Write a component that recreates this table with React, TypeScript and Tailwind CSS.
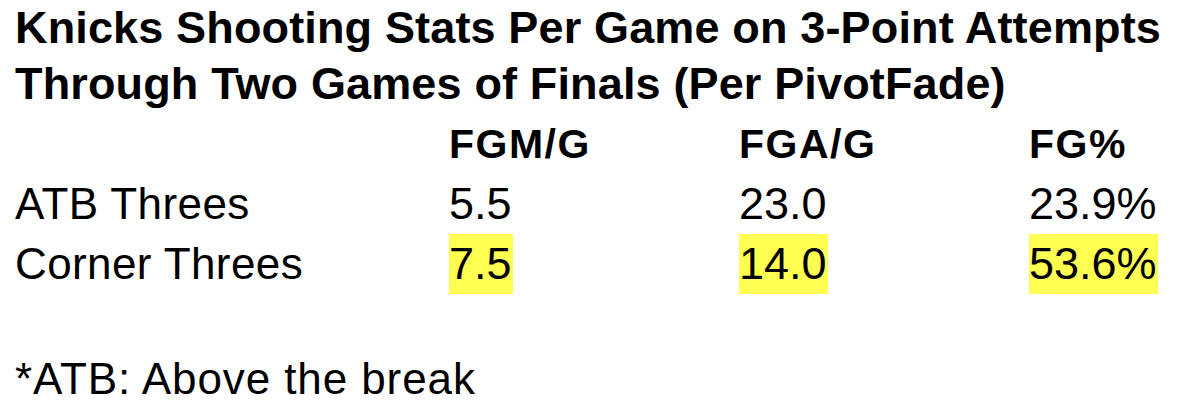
const rows = [
  { label: "ATB Threes", values: ["5.5", "23.0", "23.9%"], highlight: false },
  { label: "Corner Threes", values: ["7.5", "14.0", "53.6%"], highlight: true },
];

const headers = ["FGM/G", "FGA/G", "FG%"];

export default function App() {
  return (
    <div className="min-h-[418px] w-[1188px] bg-white pl-[15px] text-black [font-family:'Liberation_Sans',Arial,sans-serif]">
      <h1 className="text-[45px] font-bold leading-[56px] tracking-[0.15px]">
        Knicks Shooting Stats Per Game on 3-Point Attempts
        <br />
        Through Two Games of Finals (Per PivotFade)
      </h1>

      {/* table */}
      <div className="mt-[2px] grid grid-cols-[434px_290px_290px_1fr]">
        <div />
        {headers.map((h) => (
          <div
            key={h}
            className="h-[60px] text-[41px] font-bold leading-[60px] tracking-[1.5px]"
          >
            {h}
          </div>
        ))}

        {rows.map((row) => (
          <div key={row.label} className="contents">
            <div className="h-[60px] text-[44px] leading-[60px] tracking-[0.4px]">
              {row.label}
            </div>
            {row.values.map((v) => (
              <div key={v} className="h-[60px] text-[45px] leading-[60px]">
                <span
                  className={`inline-block h-[60px] pr-[1px] ${
                    row.highlight ? "bg-[#ffff52]" : ""
                  }`}
                >
                  {v}
                </span>
              </div>
            ))}
          </div>
        ))}
      </div>

      <p className="mt-[55px] text-[44px] leading-[60px] tracking-[0.9px]">
        *ATB: Above the break
      </p>
    </div>
  );
}
